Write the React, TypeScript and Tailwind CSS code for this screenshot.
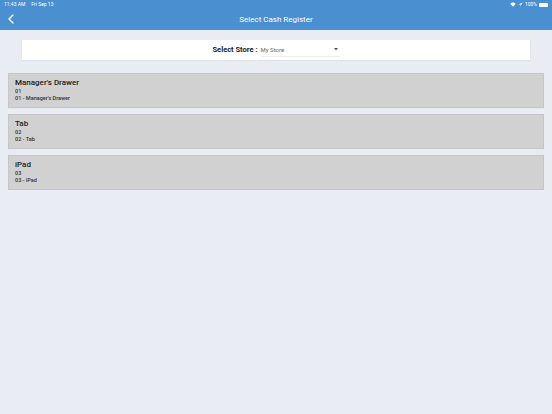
import React from "react";

const registers = [
  { name: "Manager's Drawer", code: "01", label: "01 - Manager's Drawer" },
  { name: "Tab", code: "02", label: "02 - Tab" },
  { name: "iPad", code: "03", label: "03 - iPad" },
];

export default function App() {
  return (
    <div
      className="w-[552px] h-[414px] bg-[#e9edf3] flex flex-col overflow-hidden"
      style={{ fontFamily: "Roboto, 'Liberation Sans', sans-serif" }}
    >
      <div className="bg-[#4a8fcf] h-[30px] flex flex-col shrink-0">
        <div className="h-[9px] flex items-center justify-between px-[4px] text-white text-[5px] leading-none">
          <div className="flex gap-[6px]">
            <span>11:43 AM</span>
            <span>Fri Sep 13</span>
          </div>
          <div className="flex items-center gap-[2px]">
            <svg width="6" height="5" viewBox="0 0 12 10">
              <path d="M6 9.5 L0.5 3.5 A8 8 0 0 1 11.5 3.5 Z" fill="white" />
            </svg>
            <svg width="5" height="5" viewBox="0 0 10 10">
              <path d="M9 1 L1 5 L5 5 L5 9 Z" fill="white" />
            </svg>
            <span>100%</span>
            <div className="w-[9px] h-[4px] bg-white rounded-[1px]" />
          </div>
        </div>
        <div className="flex-1 relative flex items-center justify-center">
          <svg
            className="absolute left-[8px] top-[5px]"
            width="6"
            height="10"
            viewBox="0 0 6 10"
          >
            <path d="M5 1 L1 5 L5 9" stroke="white" strokeWidth="1.4" fill="none" strokeLinecap="round" strokeLinejoin="round" />
          </svg>
          <span className="text-white text-[8px] leading-none">Select Cash Register</span>
        </div>
      </div>

      <div className="mx-[22px] mt-[10px] h-[20px] bg-white shadow-[0_0.5px_1.5px_rgba(0,0,0,0.12)] flex items-center justify-center">
        <div className="flex items-center">
          <span className="text-[7.5px] font-bold text-[#222] leading-none">Select Store :</span>
          <div className="ml-[3px] w-[79px] h-[13px] flex items-center justify-between border-b border-[#eeeeee] pr-[2px]">
            <span className="text-[6px] text-[#666] leading-none">My Store</span>
            <svg width="4" height="3" viewBox="0 0 4 3">
              <path d="M0 0 L4 0 L2 2.5 Z" fill="#555" />
            </svg>
          </div>
        </div>
      </div>

      <div className="mx-[8px] mt-[13px] flex flex-col gap-[6px]">
        {registers.map((r) => (
          <div
            key={r.code}
            className="h-[35px] bg-[#d1d1d1] border border-[#c6c6c6] px-[6px] pt-[4px] flex flex-col"
          >
            <span className="text-[8px] font-medium text-[#1a1a1a] leading-[10px]">{r.name}</span>
            <span className="text-[5.5px] font-medium text-[#333] leading-[7px]">{r.code}</span>
            <span className="text-[5.5px] font-medium text-[#333] leading-[7px]">{r.label}</span>
          </div>
        ))}
      </div>
    </div>
  );
}
